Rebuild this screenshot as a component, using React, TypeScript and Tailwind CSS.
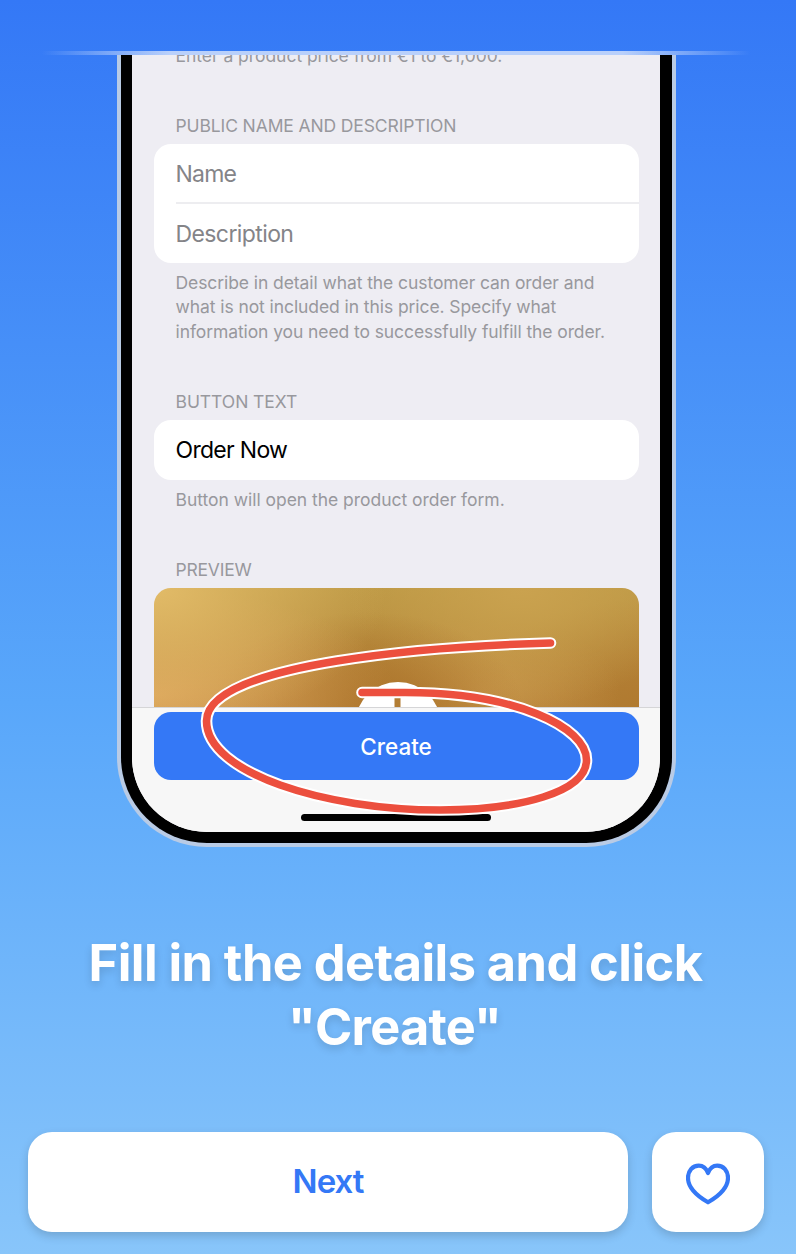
import type { ReactNode } from "react";

function Caption({ children, className = "" }: { children: ReactNode; className?: string }) {
  return <div className={`pl-[22px] text-[17.5px] leading-6 whitespace-nowrap text-[#98989d] ${className}`}>{children}</div>;
}

function Preview() {
  return (
    <div className="relative mt-[6px] h-[119px] overflow-hidden rounded-t-[17px] bg-[#bd8c3c] bg-[radial-gradient(ellipse_48%_120%_at_0%_0%,#e2bb68_0%,#dcb26000_100%),radial-gradient(ellipse_50%_90%_at_0%_90%,#dca55c_0%,#dca55c00_100%),radial-gradient(ellipse_32%_80%_at_44%_100%,#aa7229_0%,#aa722900_100%),radial-gradient(ellipse_36%_100%_at_76%_0%,#caa24f_0%,#caa24f00_100%),radial-gradient(ellipse_28%_60%_at_68%_85%,#c69449_0%,#c6944900_100%),radial-gradient(ellipse_35%_90%_at_100%_100%,#b07a30_0%,#b07a3000_100%),linear-gradient(180deg,#bd9945_0%,#b58138_100%)]">
      <svg className="absolute left-[200px] top-[94px]" width="88" height="25" viewBox="0 0 88 25" aria-hidden="true">
        <circle cx="44" cy="43" r="43" fill="#fff" />
        <rect x="40.5" y="16" width="6" height="9" fill="#b27d34" />
      </svg>
    </div>
  );
}

function Phone() {
  return (
    <div className="h-[792px] w-[559px] overflow-hidden rounded-b-[90px] bg-[#b9cbe5] px-[4px] pb-[4px]">
      <div className="h-full overflow-hidden rounded-b-[86px] bg-black px-[11.5px] pb-[11px]">
        <div className="flex h-full flex-col overflow-hidden rounded-b-[75px] bg-[#eeedf3]">
          <div className="h-[652px] overflow-hidden px-[21.5px]">
            <Caption className="-mt-[11.5px] tracking-[-0.04px]">Enter a product price from €1 to €1,000.</Caption>
            <Caption className="mt-[46.5px] tracking-[-0.12px]">PUBLIC NAME AND DESCRIPTION</Caption>
            <div className="mt-[6px] h-[119px] rounded-[17px] bg-white pl-[22px] text-[23px] tracking-[-0.6px] text-[#848488]">
              <div className="flex h-[60px] items-center border-b-2 border-[#ededf0] pt-[2px]">
                <span className="tracking-[-0.8px]">Name</span>
              </div>
              <div className="flex h-[59px] items-center pt-px">Description</div>
            </div>
            <Caption className="mt-[8px] leading-[24.3px]">
              <p className="tracking-[-0.08px]">Describe in detail what the customer can order and</p>
              <p className="tracking-[-0.08px]">what is not included in this price. Specify what</p>
              <p className="tracking-[-0.09px]">information you need to successfully fulfill the order.</p>
            </Caption>
            <Caption className="mt-[46px] tracking-[-0.06px]">BUTTON TEXT</Caption>
            <div className="mt-[6px] flex h-[60px] items-center rounded-[17px] bg-white pt-px pl-[22px] text-[23px] tracking-[-0.7px] text-black">Order Now</div>
            <Caption className="mt-[8px] tracking-[-0.03px]">Button will open the product order form.</Caption>
            <Caption className="mt-[46px] tracking-[-0.2px]">PREVIEW</Caption>
            <Preview />
          </div>
          <div className="flex flex-1 flex-col items-center border-t border-[#d5d5d7] bg-[#f7f7f7] px-[21.5px] pt-[4px]">
            <div className="flex h-[68px] w-full items-center justify-center rounded-[17px] bg-[#3478f6] pt-[2px] text-[22.5px] font-medium text-white">Create</div>
            <div className="mt-[34px] h-[7px] w-[190px] rounded-full bg-black" />
          </div>
        </div>
      </div>
    </div>
  );
}

export default function App() {
  return (
    <main className="relative flex h-[1254px] w-[796px] flex-col items-center overflow-hidden bg-[linear-gradient(180deg,#3478f6_0%,#59a7fa_56%,#88c5fa_100%)] font-['Inter','Liberation_Sans',sans-serif]">
      <div className="mt-[51px] mr-[5px] h-[4px] w-[708px] bg-[linear-gradient(90deg,#b9d0fb00_0%,#b9d0fb_18%,#b9d0fb_82%,#b9d0fb00_100%)]" />
      <div className="mr-[4px]">
        <Phone />
      </div>
      <svg className="absolute left-[190px] top-[625px]" width="420" height="200" viewBox="190 625 420 200" fill="none" strokeLinecap="round" strokeLinejoin="round" aria-hidden="true">
        <path d="M550.5 643C440 646 206.5 662 206.5 721C206.5 773 325 810 440 810C520 810 586.5 792 586.5 760C586.5 727 515 692.5 405 692.5L362 692.5" stroke="#fff" strokeWidth="11.6" />
        <path d="M550.5 643C440 646 206.5 662 206.5 721C206.5 773 325 810 440 810C520 810 586.5 792 586.5 760C586.5 727 515 692.5 405 692.5L362 692.5" stroke="#ec4f3e" strokeWidth="7.6" />
      </svg>
      <h1 className="mt-[84px] mr-[5px] text-center text-[50.5px] leading-[64px] font-bold tracking-[-0.56px] whitespace-nowrap text-white [text-shadow:0_4px_8px_rgba(0,0,0,0.14)]">
        Fill in the details and click
        <br />
        <span className="mr-[2px] tracking-[-0.8px]">"Create"</span>
      </h1>
      <div className="mt-[73px] flex w-full gap-6 pr-8 pl-7">
        <button className="h-[100px] w-[600px] rounded-[24px] bg-white text-[33px] font-semibold tracking-[-1px] text-[#3478f6] shadow-[0_4px_10px_rgba(0,0,0,0.16)]">Next</button>
        <button aria-label="Favourite" className="flex h-[100px] w-[112px] items-center justify-center rounded-[24px] bg-white shadow-[0_4px_10px_rgba(0,0,0,0.16)]">
          <svg width="44" height="42" viewBox="0 0 44 42" fill="none" stroke="#3478f6" strokeWidth="4.2" strokeLinejoin="round" className="mt-[3px]" aria-hidden="true">
            <path d="M22 10C20 5 16.5 2.7 12.8 2.7C6.5 2.7 2 7.8 2 14.8C2 24.5 11 33 22 39.3C33 33 42 24.5 42 14.8C42 7.8 37.5 2.7 31.2 2.7C27.5 2.7 24 5 22 10Z" />
          </svg>
        </button>
      </div>
    </main>
  );
}
